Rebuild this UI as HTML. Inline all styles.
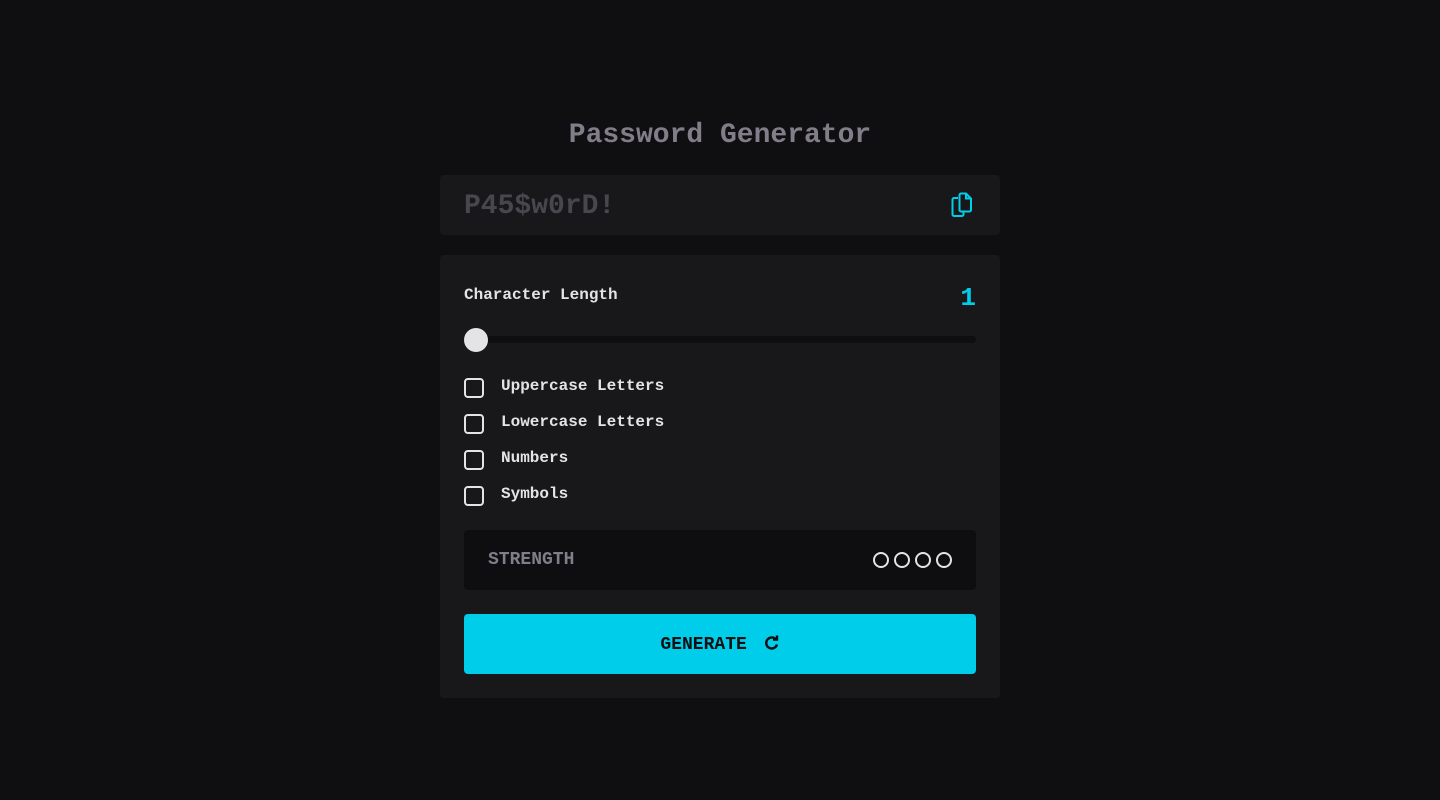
<!DOCTYPE html>
<html><head><style>
*{margin:0;padding:0;box-sizing:border-box}
body{width:1440px;height:800px;background:#0f0f11;font-family:"Liberation Mono",monospace;position:relative;overflow:hidden}
.t{position:absolute;top:118px;left:0;width:1440px;text-align:center;color:#817d89;font-size:28px;font-weight:bold;line-height:36px}
.pw{position:absolute;left:440px;top:175px;width:560px;height:60px;background:#18181b;border-radius:4px}
.pw span{position:absolute;left:24px;top:15px;font-size:28px;font-weight:bold;color:#47474d;line-height:34px}
.card{position:absolute;left:440px;top:255px;width:560px;height:443px;background:#18181b;border-radius:4px}
.lbl{position:absolute;left:24px;top:31px;font-size:16px;font-weight:bold;color:#e4e4e7}
.num{position:absolute;right:24px;top:28px;font-size:26px;font-weight:bold;color:#00cde8}
.track{position:absolute;left:24px;top:81px;width:512px;height:7px;background:#0e0e10;border-radius:4px}
.thumb{position:absolute;left:24px;top:73px;width:24px;height:24px;border-radius:50%;background:#e4e4e7}
.cb{position:absolute;left:24px;width:20px;height:20px;border:2px solid #e4e4e7;border-radius:4px}
.cl{position:absolute;left:61px;font-size:16px;font-weight:bold;color:#e4e4e7}
.st{position:absolute;left:24px;top:275px;width:512px;height:60px;background:#0e0e10;border-radius:4px}
.st span{position:absolute;left:24px;top:20px;font-size:18px;font-weight:bold;color:#817d89}
.dot{position:absolute;top:22px;width:16px;height:16px;border:2px solid #e4e4e7;border-radius:50%}
.btn{position:absolute;left:24px;top:359px;width:512px;height:60px;background:#00cde9;border-radius:4px;text-align:center;font-size:18px;font-weight:bold;color:#0f0f11;line-height:60px;padding-top:1px}
</style></head><body>
<div class="t">Password Generator</div>
<div class="pw"><span>P45$w0rD!</span>
<svg style="position:absolute;left:511px;top:17px" width="22" height="26" viewBox="0 0 22 26" fill="none" stroke="#00cde8" stroke-width="2"><path d="M7 6 H3 a1.5 1.5 0 0 0 -1.5 1.5 V22.5 A1.5 1.5 0 0 0 3 24 H11 A1.5 1.5 0 0 0 12.5 22.5 V20"/><path d="M8.5 3 A1.5 1.5 0 0 1 10 1.5 H15 L20 6.5 V18 A1.5 1.5 0 0 1 18.5 19.5 H10 A1.5 1.5 0 0 1 8.5 18 Z"/><path d="M15 1.5 V6.5 H20"/></svg>
</div>
<div class="card">
<div class="lbl">Character Length</div>
<div class="num">1</div>
<div class="track"></div><div class="thumb"></div>
<div class="cb" style="top:123px"></div><div class="cl" style="top:122px">Uppercase Letters</div>
<div class="cb" style="top:159px"></div><div class="cl" style="top:158px">Lowercase Letters</div>
<div class="cb" style="top:195px"></div><div class="cl" style="top:194px">Numbers</div>
<div class="cb" style="top:231px"></div><div class="cl" style="top:230px">Symbols</div>
<div class="st"><span>STRENGTH</span>
<div class="dot" style="left:409px"></div><div class="dot" style="left:430px"></div><div class="dot" style="left:451px"></div><div class="dot" style="left:472px"></div></div>
<div class="btn">GENERATE <svg style="vertical-align:-2px;margin-left:6px" width="16" height="16" viewBox="0 0 16 16" fill="none" stroke="#0f0f11" stroke-width="2.4"><path d="M13 9.5 A5.5 5.5 0 1 1 11.5 4"/><path d="M9 4.5 H13 V0.5" fill="none"/></svg></div>
</div>
</body></html>
